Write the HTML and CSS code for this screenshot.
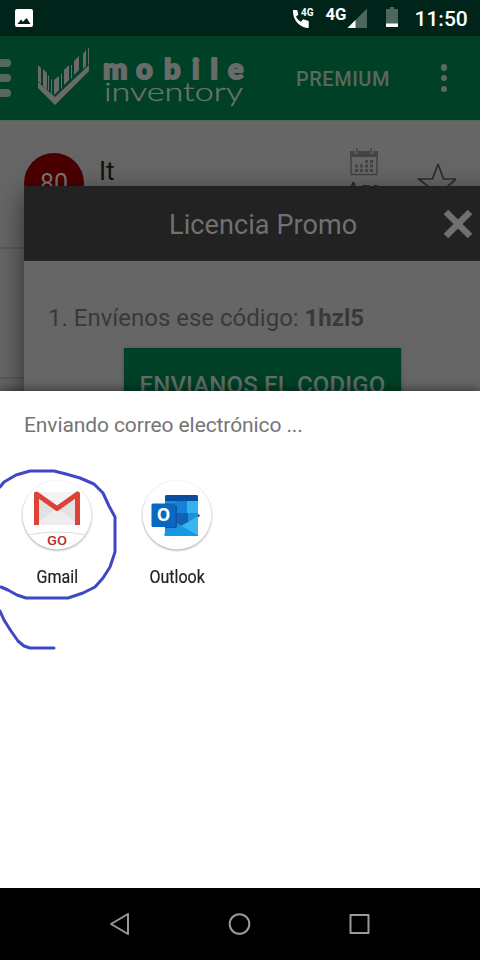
FILE: index.html
```
<!DOCTYPE html>
<html lang="es">
<head>
<meta charset="utf-8">
<title>Mobile Inventory</title>
<link rel="stylesheet" href="styles.css">
</head>
<body>
<div class="phone">
  <header class="status">
    <svg class="photo" viewBox="0 0 18 18"><rect width="18" height="18" rx="2" fill="#fff"/><path d="M2.500 15 6 10.500l2 2.200L11.500 9l4 6z" fill="#002419"/></svg>
    <svg class="signals" viewBox="0 0 110 36">
      <path d="M3 10h4.200l1.200 4.500-2.400 2.300c1.200 2.300 2.600 3.700 4.800 4.900l2.400-2.400 5.500 1.800V28C10.500 28 2.200 20.500 3 10z" fill="#fff"/>
      <text class="small-net" x="11" y="15.500" textLength="12.500" lengthAdjust="spacingAndGlyphs">4G</text>
      <text class="net" x="35.500" y="19.800" textLength="21" lengthAdjust="spacingAndGlyphs">4G</text>
      <path d="M57.500 28 77 8.500V28z" fill="#4d665e"/><path d="M57.500 28l8-8v8z" fill="#fff"/>
      <path d="M96 9h4V7h4v2h4v18H96z" fill="#4d665e"/><path d="M96 23.500h12V27H96z" fill="#fff"/>
    </svg>
    <span class="clock">11:50</span>
  </header>
  <nav class="appbar">
    <div class="burger"><i></i><i></i><i></i></div>
    <svg class="logo" viewBox="0 0 212 84">
      <g fill="#686b69">
        <path d="M0 46 17 61 51 29v6L17 69 0 52z"/>
        <path d="M0 29l3 3v16l-3-3zM5 33l4 4v17l-4-4zM10 39l1 1v15l-1-1zM13 43l1 1v14l-1-1zM16 44l5-4v14l-5 5zM23 38h1v14l-1 1zM26 34l5-5v15l-5 5zM33 29h1v13l-1 1zM36 25l5-5v14l-5 5zM45 18l3-4v16l-3 3zM50 12h1v16l-1 1z"/>
      </g>
      <text class="logo-bold" x="65 98 126 154 172.500 190" y="43">mobile</text>
      <text class="logo-thin" x="66" y="65" textLength="139" lengthAdjust="spacingAndGlyphs">inventory</text>
    </svg>
    <span class="premium">PREMIUM</span>
    <div class="more"><i></i><i></i><i></i></div>
  </nav>
  <main class="list">
    <div class="row">
      <span class="badge">80</span>
      <span class="item">It</span>
      <div class="date">
        <svg viewBox="0 0 28 28"><path d="M1 8V26.500h26V8" fill="none" stroke="#444" stroke-width="1.500"/><path d="M0 3h5v3h3V3h12v3h3V3h5v6H0zM6 0h1.500v5H6zM20.500 0H22v5h-1.500z" fill="#444"/><path d="M15 12h3v3h-3zM20 12h3v3h-3zM5 16.500h3v3H5zM10 16.500h3v3h-3zM15 16.500h3v3h-3zM20 16.500h3v3h-3zM5 21h3v3H5zM10 21h3v3h-3zM15 21h3v3h-3zM20 21h3v3h-3z" fill="#444"/></svg>
        <span>Ago</span>
      </div>
      <svg class="star" viewBox="0 0 40 40"><path d="M21 3l5.500 15H39M21 3l-5.500 15H1.500L12 26l-4 12 13-8 13 8-4-12 9-8" fill="none" stroke="#2c2c2c" stroke-width="1.700"/></svg>
    </div>
    <div class="row tall"></div>
  </main>
  <section class="dialog">
    <div class="dialog-head"><h1>Licencia Promo</h1>
      <svg viewBox="0 0 30 30"><path d="M3 3l24 24M27 3 3 27" stroke="#707070" stroke-width="6.500"/></svg>
    </div>
    <p>1. Envíenos ese código: <b>1hzl5</b></p>
    <div class="send">ENVIANOS EL CODIGO</div>
  </section>
  <section class="sheet">
    <h2>Enviando correo electrónico ...</h2>
    <div class="apps">
      <div class="app">
        <svg viewBox="0 0 72 72"><circle class="disc" cx="36" cy="35" r="34.500"/>
          <path d="M13 12h46v33H13z" fill="#e2e2e2"/><path d="M13 45 36 28l23 17z" fill="#ededed"/><path d="M13 12h46L36 28z" fill="#f3f3f3"/>
          <path d="M15.500 45V14L36 28.500 56.500 14v31" fill="none" stroke="#dc4238" stroke-width="5" stroke-linejoin="round"/>
          <path d="M7 55Q36 49 65 55" fill="none" stroke="#ddd"/>
          <text class="go" x="26" y="65" textLength="20" lengthAdjust="spacingAndGlyphs">GO</text></svg>
        <span>Gmail</span>
      </div>
      <div class="app">
        <svg viewBox="0 0 72 72"><circle class="disc" cx="36" cy="35" r="34.500"/>
          <rect x="24" y="15" width="33" height="41" rx="1.500" fill="#238ddb"/>
          <path d="M24 21v-4q0-2 2-2h29q2 0 2 2v4z" fill="#0a4ea0"/>
          <path d="M34 21h12v12H34z" fill="#1680d5"/><path d="M46 21h11v12H46z" fill="#36b1ed"/>
          <path d="M57 34l2 1.500-2 2z" fill="#123b6d"/>
          <path d="M34 33h13v8h4l-10 5-7-4z" fill="#1261b5"/>
          <path d="M57 36v20L40 46z" fill="#38b6ef"/><path d="M23 54l17-8 18 10H25q-2 0-2-2z" fill="#1599e5"/>
          <path d="M24 46h10V26h2v20q0 2-2 2H24z" fill="#0b55a0"/>
          <rect x="10.500" y="23.500" width="24" height="23.500" rx="1.500" fill="#0968c2"/>
          <text class="letter" x="22.500" y="41" text-anchor="middle">O</text></svg>
        <span>Outlook</span>
      </div>
    </div>
  </section>
  <svg class="scribble" viewBox="0 0 130 200"><path d="M0 27 4 22l12-7 14-4h24l12 3 14 4 14 6 9 9 6 13 6 11v35l-5 15-7 11-8 9-12 6-15 5H26l-9-3-9-5-7-3"/><path d="M0 151l4 9 7 11 7 10 6 5 6 2h24"/></svg>
  <footer class="navbar">
    <svg viewBox="0 0 24 24"><path d="M3 12 20 2v20z"/></svg>
    <svg viewBox="0 0 24 24"><circle cx="11.500" cy="12" r="9.800"/></svg>
    <svg viewBox="0 0 24 24"><path d="M2.500 3h18v18h-18z"/></svg>
  </footer>
</div>
</body>
</html>
```
FILE: styles.css
```
* { box-sizing: border-box; }
body { margin: 0; font-family: Roboto, "Liberation Sans", sans-serif; }
svg { display: block; flex: none; }
h1, h2, p { margin: 0; font-weight: 400; white-space: nowrap; }
.phone { position: relative; width: 480px; height: 960px; overflow: hidden; display: flex; flex-direction: column; background: #666; }
.status { height: 36px; flex: none; background: #002419; display: flex; align-items: center; padding-left: 15px; color: #fff; }
.photo { width: 18px; height: 18px; }
.signals { width: 110px; height: 36px; margin-left: 257px; }
.small-net { font: 700 10px Roboto, sans-serif; fill: #fff; }
.net { font: 700 16px Roboto, sans-serif; fill: #fff; }
.clock { font-size: 21px; font-weight: 500; margin-left: 14.5px; line-height: 36px; padding-top: 2px; }
.appbar { height: 85px; flex: none; background: #004026; border-bottom: 1px solid #4e665d; display: flex; align-items: center; }
.burger { width: 11px; height: 38px; display: flex; flex-direction: column; justify-content: space-between; flex: none; }
.burger i { height: 8px; background: #56675f; border-radius: 0 4px 4px 0; }
.logo { width: 212px; height: 84px; margin-left: 27px; }
.logo-bold { font: 900 29px Lato, sans-serif; fill: #686b69; stroke: #686b69; stroke-width: 2; stroke-linejoin: round; }
.logo-thin { font: 300 26px Lato, sans-serif; fill: #707471; stroke: #707471; stroke-width: .3; }
.premium { width: 100px; margin-left: 46px; padding-top: 2px; font-size: 20px; letter-spacing: .5px; font-weight: 500; color: #5a685f; }
.more { width: 8px; height: 28px; margin-left: 44.500px; display: flex; flex-direction: column; justify-content: space-between; }
.more i { width: 6.500px; height: 6.500px; border-radius: 50%; background: #5a6961; }
.list { flex: 1; background: #666; }
.row { height: 128px; border-bottom: 2px solid #5a5a5a; display: flex; align-items: flex-start; padding: 26px 0 0 24px; }
.tall { height: 130px; }
.badge { margin-top: 6px; width: 60px; height: 60px; border-radius: 50%; background: #4b0000; color: #777; font-size: 25px; line-height: 62px; text-align: center; }
.item { width: 249px; margin: 9px 0 0 15px; font-size: 26px; line-height: 30px; color: #111; }
.date { width: 32px; display: flex; flex-direction: column; align-items: center; color: #222; font-size: 19px; line-height: 24px; }
.date svg { width: 28px; height: 28px; margin-top: 1px; }
.date span { margin-top: 1px; }
.star { width: 40px; height: 40px; margin: 14px 0 0 37px; }
.dialog { position: absolute; left: 24px; top: 186px; width: 480px; height: 300px; background: #666; box-shadow: 0 8px 26px rgba(0,0,0,.55); }
.dialog-head { height: 75px; background: #222; display: flex; align-items: center; color: #707070; border-bottom: 1px solid #292929; }
.dialog-head h1 { width: 274px; margin-left: 145px; font-size: 27px; letter-spacing: .1px; line-height: 36px; padding-top: 4px; }
.dialog-head svg { width: 30px; height: 30px; margin-top: 1px; }
.dialog p { margin: 42px 0 0 24px; font-size: 24px; line-height: 30px; color: #393939; }
.send { width: 277px; height: 72px; margin: 15px 0 0 100px; background: #004026; color: #5f6e66; font-size: 24px; letter-spacing: .15px; font-weight: 500; line-height: 74px; text-align: center; white-space: nowrap; box-shadow: 0 1px 3px #444; }
.sheet { position: absolute; left: 0; top: 391px; width: 480px; height: 497px; background: #fff; padding: 20px 0 0 21px; box-shadow: 0 -1px 10px rgba(0,0,0,.5); }
.sheet h2 { margin-left: 3px; font-size: 21px; letter-spacing: -.1px; line-height: 28px; color: #757575; }
.apps { display: flex; gap: 48px; margin-top: 41px; }
.app { width: 72px; display: flex; flex-direction: column; align-items: center; }
.app svg { width: 72px; height: 72px; }
.app span { margin-top: 13px; font-size: 18px; line-height: 24px; color: #212121; transform: scaleX(.89); -webkit-text-stroke: .2px #212121; }
.disc { fill: #fff; filter: drop-shadow(0 1px 1px rgba(0,0,0,.38)); }
.go { font: 500 13px Roboto, sans-serif; fill: #b9302b; }
.app svg .letter { font: 700 17px "Open Sans", sans-serif; fill: #fff; }
.scribble { position: absolute; left: 0; top: 460px; width: 130px; height: 200px; fill: none; stroke: #3f48c4; stroke-width: 3; stroke-linecap: round; stroke-linejoin: round; }
.navbar { position: relative; height: 72px; flex: none; background: #000; display: flex; align-items: center; justify-content: center; gap: 96px; }
.navbar svg { width: 24px; height: 24px; fill: none; stroke: #999; stroke-width: 2; stroke-linejoin: round; }
```
